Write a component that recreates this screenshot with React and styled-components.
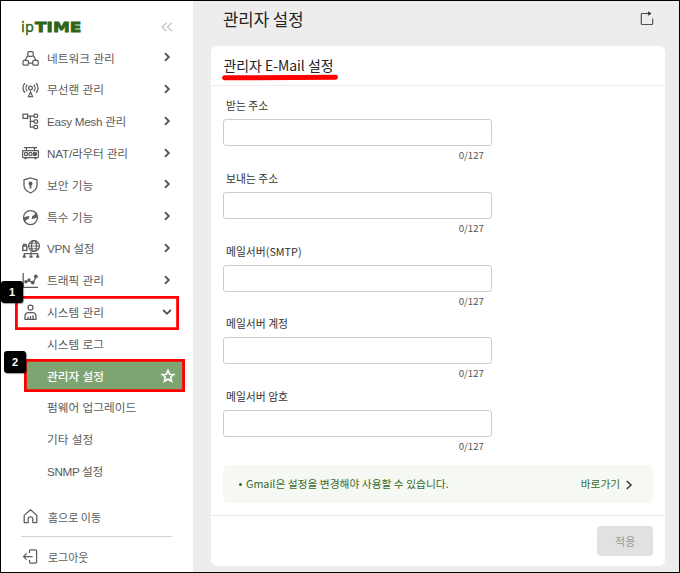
import React from "react";
import styled, { createGlobalStyle } from "styled-components";

const menu = [
  { label: "네트워크 관리", icon: "network" },
  { label: "무선랜 관리", icon: "wireless" },
  { label: "Easy Mesh 관리", icon: "mesh", tracking: -0.3 },
  { label: "NAT/라우터 관리", icon: "router", tracking: -0.2 },
  { label: "보안 기능", icon: "shield" },
  { label: "특수 기능", icon: "special" },
  { label: "VPN 설정", icon: "vpn", tracking: -0.25 },
  { label: "트래픽 관리", icon: "traffic" },
  { label: "시스템 관리", icon: "system", open: true },
];

const subMenu = [
  { label: "시스템 로그" },
  { label: "관리자 설정", active: true },
  { label: "펌웨어 업그레이드" },
  { label: "기타 설정" },
  { label: "SNMP 설정", tracking: -0.35 },
];

const fields = [
  "받는 주소",
  "보내는 주소",
  "메일서버(SMTP)",
  "메일서버 계정",
  "메일서버 암호",
];

const shapes = {
  network: (
    <>
      <rect x="5.8" y="1.5" width="5.4" height="4.8" rx="1.2" />
      <rect x="1" y="10.4" width="5.4" height="4.8" rx="1" />
      <rect x="10.8" y="10.4" width="5.4" height="4.8" rx="1" />
      <path d="M5.8 5.6 3 10.2M11.2 5.6 14 10.2M6.4 13h4.4" />
    </>
  ),
  wireless: (
    <>
      <circle cx="8.5" cy="7" r="1.9" />
      <path d="M5.2 3.8a4.7 4.7 0 0 0 0 6.4M11.8 3.8a4.7 4.7 0 0 1 0 6.4M2.9 2.2a7 7 0 0 0 0 9.6M14.1 2.2a7 7 0 0 1 0 9.6" />
      <path d="M8.5 11 6.4 15.6h4.2z" />
    </>
  ),
  mesh: (
    <>
      <rect x="1" y="1.2" width="4.6" height="4.2" />
      <rect x="12" y="1.2" width="3.6" height="3.2" rx="1" />
      <rect x="12" y="6.8" width="3.6" height="3.2" rx="1" />
      <rect x="12" y="12.4" width="3.6" height="3.2" rx="1" />
      <path d="M5.6 3H12M8.4 3v11H12M8.4 8.4H12" />
    </>
  ),
  router: (
    <>
      <path d="M2 2.5h13M4.5 2.5v3M12.5 2.5v3" />
      <rect x="0.6" y="5.5" width="15.8" height="7" rx="0.8" />
      <circle cx="4" cy="9" r="1.6" />
      <circle cx="8.4" cy="9" r="1.6" />
      <circle cx="12.9" cy="9" r="1.7" fill="currentColor" />
      <path d="M2.5 13.5h2M12.5 13.5h2" />
    </>
  ),
  shield: (
    <>
      <path d="M8.5 1 15 2.8V8.5c0 3.6-2.6 5.6-6.5 7.5C4.6 14.1 2 12.1 2 8.5V2.8z" />
      <circle cx="8.5" cy="6.4" r="2" fill="currentColor" stroke="none" />
      <path d="M8.5 6.5v5" strokeWidth="1.8" />
    </>
  ),
  special: (
    <>
      <circle cx="8.5" cy="8.5" r="7" />
      <path
        d="M1.8 9.2 4.6 8l2-.3-.4 1.6-2.4 1.2-1.2 1.4zM15.2 7.8 12.4 9l-2 .3.4-1.6 2.2-1.6 1-1.6z"
        fill="currentColor"
      />
    </>
  ),
  vpn: (
    <>
      <circle cx="12" cy="6" r="5.4" />
      <ellipse cx="12" cy="6" rx="2.5" ry="5.4" />
      <path d="M6.6 6h10.8M7.5 3.3h9M7.5 8.7h9" strokeWidth="0.8" />
      <rect x="0.8" y="6" width="4" height="4.4" strokeWidth="1.4" />
      <path d="M1.6 6V4.4h2.4V6M9 11.5v4M2.3 16v-2.4h13.4V16" />
      <path d="M0.8 16.6h3M7.5 16.6h3M14.2 16.6h3" strokeWidth="2.4" />
    </>
  ),
  traffic: (
    <>
      <path d="M1.2 1v14.4H16" />
      <path d="m3.5 9.5 3.4-.6 4.2 1.6 3.2-5.8" />
      <g fill="currentColor" stroke="none">
        <circle cx="3.9" cy="9.8" r="1.7" />
        <circle cx="7" cy="7.8" r="1.6" />
        <circle cx="10.8" cy="10.6" r="1.9" />
        <circle cx="13.8" cy="4.4" r="1.9" />
      </g>
    </>
  ),
  system: (
    <>
      <circle cx="8.5" cy="3.6" r="2.5" />
      <path d="M3 15.4v-2.8c0-2.4 1.5-4 3.6-4h3.8c2.1 0 3.6 1.6 3.6 4v2.8z" />
      <path d="M6 15v-2.2M8.5 15v-3M11 15v-3.8" />
    </>
  ),
  home: (
    <path
      d="M2.2 7.4 8.5 1.8l6.3 5.6v7.1h-4V10.8c0-1.3-.8-2-2.3-2s-2.3.7-2.3 2v3.7h-4z"
      strokeLinejoin="round"
    />
  ),
  logout: (
    <path
      d="M7.5 5V3c0-.7.4-1.1 1.1-1.1h4.9c.7 0 1.1.4 1.1 1.1v11c0 .7-.4 1.1-1.1 1.1H8.6c-.7 0-1.1-.4-1.1-1.1V12M10.6 8.5H1.5M4.6 5.4 1.5 8.5l3.1 3.1"
    />
  ),
};

const Icon = ({ name }) => (
  <IconSvg viewBox="0 0 18 18">{shapes[name]}</IconSvg>
);

const App = () => {
  return (
    <>
      <GlobalStyle />
      <Frame>
        <Sidebar>
          <Brand>
            <Logo>
              <LogoIp>ip</LogoIp>
              <LogoTime>TIME</LogoTime>
            </Logo>
            <Collapse viewBox="0 0 12 10">
              <path d="M5.5.8 1.2 5l4.3 4.2M10.8.8 6.5 5l4.3 4.2" />
            </Collapse>
          </Brand>

          {menu.map((item) => (
            <MenuRow key={item.label}>
              <Icon name={item.icon} />
              <MenuText $tracking={item.tracking}>{item.label}</MenuText>
              <Chevron viewBox="0 0 10 10" $open={item.open}>
                <path d="M3 1.2 6.8 5 3 8.8" />
              </Chevron>
            </MenuRow>
          ))}
          {subMenu.map((item) => (
            <SubRow key={item.label} $active={item.active}>
              <MenuText $tracking={item.tracking}>{item.label}</MenuText>
              {item.active && (
                <Star viewBox="0 0 14 14">
                  <path d="m7 1.3 1.6 3.9 4.2.3-3.2 2.7 1 4.1L7 10.1l-3.6 2.2 1-4.1L1.2 5.5l4.2-.3z" />
                </Star>
              )}
            </SubRow>
          ))}

          <Bottom>
            <BottomRow>
              <Icon name="home" />
              <BottomText>홈으로 이동</BottomText>
            </BottomRow>
            <Divider />
            <BottomRow>
              <Icon name="logout" />
              <BottomText>로그아웃</BottomText>
            </BottomRow>
          </Bottom>
        </Sidebar>

        <Main>
          <PageHead>
            <PageTitle>관리자 설정</PageTitle>
            <Share viewBox="0 0 14 15">
              <path d="M6.5 2.5H2.2c-.5 0-.9.3-.9.9v9.2c0 .5.4.9.9.9h9.6c.5 0 .9-.4.9-.9V7.5" />
              <path d="M5 2.5h5.5" />
              <path d="M8.2.2 11.4 2.5 8.2 4.8z" fill="#302832" stroke="none" />
            </Share>
          </PageHead>

          <Card>
            <CardHead>
              <CardTitle>관리자 E-Mail 설정</CardTitle>
            </CardHead>
            <CardBody>
              {fields.map((label) => (
                <Field key={label}>
                  <FieldLabel>{label}</FieldLabel>
                  <Input aria-label={label} />
                  <Counter>0/127</Counter>
                </Field>
              ))}
              <Notice>
                <NoticeText>
                  <Bullet />
                  Gmail은 설정을 변경해야 사용할 수 있습니다.
                </NoticeText>
                <NoticeLink>
                  바로가기
                  <NoticeArrow viewBox="0 0 8 10">
                    <path d="M1.8 1 6 5 1.8 9" />
                  </NoticeArrow>
                </NoticeLink>
              </Notice>
            </CardBody>
            <CardFoot>
              <Apply disabled>적용</Apply>
            </CardFoot>
          </Card>
        </Main>

        <Outline $x={14} $y={294.5} $w={163.5} $h={34} />
        <Outline $x={23} $y={357.6} $w={161} $h={33.6} />
        <Badge $x={0} $y={280}>1</Badge>
        <Badge $x={3} $y={350}>2</Badge>
      </Frame>
    </>
  );
};

const GlobalStyle = createGlobalStyle`
  * {
    box-sizing: border-box;
  }

  body {
    margin: 0;
    font-family: "Noto Sans CJK KR", sans-serif;
  }
`;

const Frame = styled.div`
  position: relative;
  display: flex;
  width: 680px;
  height: 573px;
  overflow: hidden;
  border: 1px solid #000;
  background: #ededed;
`;

const Sidebar = styled.nav`
  display: flex;
  flex-direction: column;
  width: 191.5px;
  flex: none;
  background: #fff;
  color: #5c5c5c;
`;

const Brand = styled.div`
  display: flex;
  justify-content: space-between;
  height: 40.3px;
  flex: none;
  padding: 17px 20px 0 20px;
`;

const Logo = styled.div`
  display: flex;
  align-items: baseline;
  height: 18px;
  line-height: 18px;
  color: #2d6417;
`;

const LogoIp = styled.span`
  width: 14px;
  font: 14px/18px "DejaVu Sans", sans-serif;
  -webkit-text-stroke: 0.3px #2d6417;
`;

const LogoTime = styled.span`
  font: bold 14.5px/18px "DejaVu Sans", sans-serif;
  transform: scaleX(1.17);
  transform-origin: left;
  -webkit-text-stroke: 0.8px #2d6417;
`;

const Collapse = styled.svg`
  width: 12px;
  height: 10px;
  margin-top: 4px;
  fill: none;
  stroke: #c4c4c4;
  stroke-width: 1.3;
`;

const MenuRow = styled.div`
  display: flex;
  align-items: center;
  height: 31.8px;
  flex: none;
  padding: 0 21px 0 21px;
`;

const SubRow = styled.div`
  display: flex;
  align-items: center;
  justify-content: space-between;
  height: 31.8px;
  flex: none;
  margin: 0 10px 0 24px;
  padding: 0 8px 0 22px;
  background: ${(props) => (props.$active ? "#7ea471" : "transparent")};
  color: ${(props) => (props.$active ? "#fff" : "inherit")};
  font-weight: ${(props) => (props.$active ? 500 : 400)};
`;

const MenuText = styled.span`
  flex: 1;
  font-family: "Liberation Sans", "Noto Sans CJK KR", sans-serif;
  font-size: 11.7px;
  letter-spacing: ${(props) => props.$tracking ?? 0}px;
  white-space: nowrap;
`;

const IconSvg = styled.svg`
  width: 18px;
  height: 18px;
  margin: 3px 7px 0 0;
  flex: none;
  fill: none;
  stroke: currentColor;
  stroke-width: 1.25;
`;

const Chevron = styled.svg`
  width: 10px;
  height: 10px;
  fill: none;
  stroke: #505050;
  stroke-width: 1.8;
  transform: ${(props) => (props.$open ? "rotate(90deg)" : "none")};
`;

const Star = styled.svg`
  width: 14px;
  height: 14px;
  margin-top: 2px;
  fill: none;
  stroke: #fff;
  stroke-width: 1.6;
`;

const Bottom = styled.div`
  padding: 12px 21px 0 20px;
`;

const BottomRow = styled.div`
  display: flex;
  align-items: center;
  height: 38px;
  padding-left: 1px;

  ${IconSvg} {
    margin-top: 0;
  }
`;

const BottomText = styled.span`
  margin: -1px 0 0 1px;
  font-size: 11px;
`;

const Divider = styled.div`
  height: 1px;
  margin-bottom: 1px;
  background: #d2d6ca;
`;

const Main = styled.main`
  display: flex;
  flex: 1;
  flex-direction: column;
  padding: 0 13.8px 0 18.5px;
`;

const PageHead = styled.header`
  display: flex;
  align-items: center;
  justify-content: space-between;
  height: 45px;
  flex: none;
  padding: 0 11.5px 10px 12px;
`;

const PageTitle = styled.h1`
  margin: 0;
  font-size: 16.7px;
  font-weight: 400;
  color: #222;
`;

const Share = styled.svg`
  width: 14px;
  height: 15px;
  fill: none;
  stroke: #564c58;
  stroke-width: 1.2;
`;

const Card = styled.section`
  display: flex;
  flex-direction: column;
  height: 520px;
  border-radius: 6px;
  background: #fff;
`;

const CardHead = styled.div`
  display: flex;
  align-items: center;
  height: 40px;
  flex: none;
  padding: 0 0 2px 12.5px;
  border-bottom: 1px solid #ececec;
`;

const CardTitle = styled.h2`
  position: relative;
  margin: 0;
  font-size: 13.9px;
  font-weight: 400;
  color: #222;

  &::after {
    content: "";
    position: absolute;
    left: -2px;
    right: -4px;
    bottom: -5px;
    height: 5px;
    border-radius: 3px;
    background: #f00;
    transform: rotate(-0.3deg);
  }
`;

const CardBody = styled.div`
  flex: 1;
  padding: 10px 12px 0;
`;

const Field = styled.div`
  display: flex;
  flex-direction: column;
  width: 269px;
  height: 72.8px;
`;

const FieldLabel = styled.label`
  height: 23px;
  padding-left: 3px;
  font-size: 10.8px;
  line-height: 19px;
  color: #333;
`;

const Input = styled.input`
  width: 269px;
  height: 27px;
  padding: 0 8px;
  border: 1px solid #ccc;
  border-radius: 3px;
  background: #fff;
`;

const Counter = styled.span`
  padding-right: 8px;
  font-size: 9.7px;
  line-height: 18px;
  text-align: right;
  color: #555;
`;

const Notice = styled.div`
  display: flex;
  align-items: center;
  justify-content: space-between;
  height: 38px;
  margin-top: 5px;
  padding: 0 20px 0 16px;
  border-radius: 5px;
  background: #f6f9f3;
  color: #39692c;
  font-size: 10.75px;
`;

const NoticeText = styled.span`
  display: flex;
  align-items: center;
`;

const Bullet = styled.i`
  width: 3px;
  height: 3px;
  margin: 1px 4px 0 0;
  border-radius: 50%;
  background: currentColor;
`;

const NoticeLink = styled.a`
  display: flex;
  align-items: center;
  gap: 5px;
`;

const NoticeArrow = styled.svg`
  width: 8px;
  height: 10px;
  margin-top: 2px;
  fill: none;
  stroke: #333;
  stroke-width: 1.5;
`;

const CardFoot = styled.div`
  display: flex;
  align-items: center;
  justify-content: flex-end;
  height: 51px;
  flex: none;
  padding-right: 12px;
  border-top: 1px solid #e8e8e8;
`;

const Apply = styled.button`
  width: 56px;
  height: 30px;
  padding: 0;
  border: 0;
  border-radius: 4px;
  background: #e1e1e1;
  color: #999;
  font-family: inherit;
  font-size: 11px;
`;

/* callouts drawn over the menu */
const Outline = styled.div`
  position: absolute;
  left: ${(props) => props.$x}px;
  top: ${(props) => props.$y}px;
  width: ${(props) => props.$w}px;
  height: ${(props) => props.$h}px;
  box-shadow: inset 0 0 0 2.8px #f00;
`;

const Badge = styled.div`
  position: absolute;
  left: ${(props) => props.$x}px;
  top: ${(props) => props.$y}px;
  display: flex;
  align-items: center;
  justify-content: center;
  width: 22px;
  height: 22px;
  border-radius: 3px;
  background: #000;
  box-shadow: 1px 1px 1px rgba(0, 0, 0, 0.4);
  color: #fff;
  font: bold 11px "Liberation Sans", sans-serif;
`;

export default App;
